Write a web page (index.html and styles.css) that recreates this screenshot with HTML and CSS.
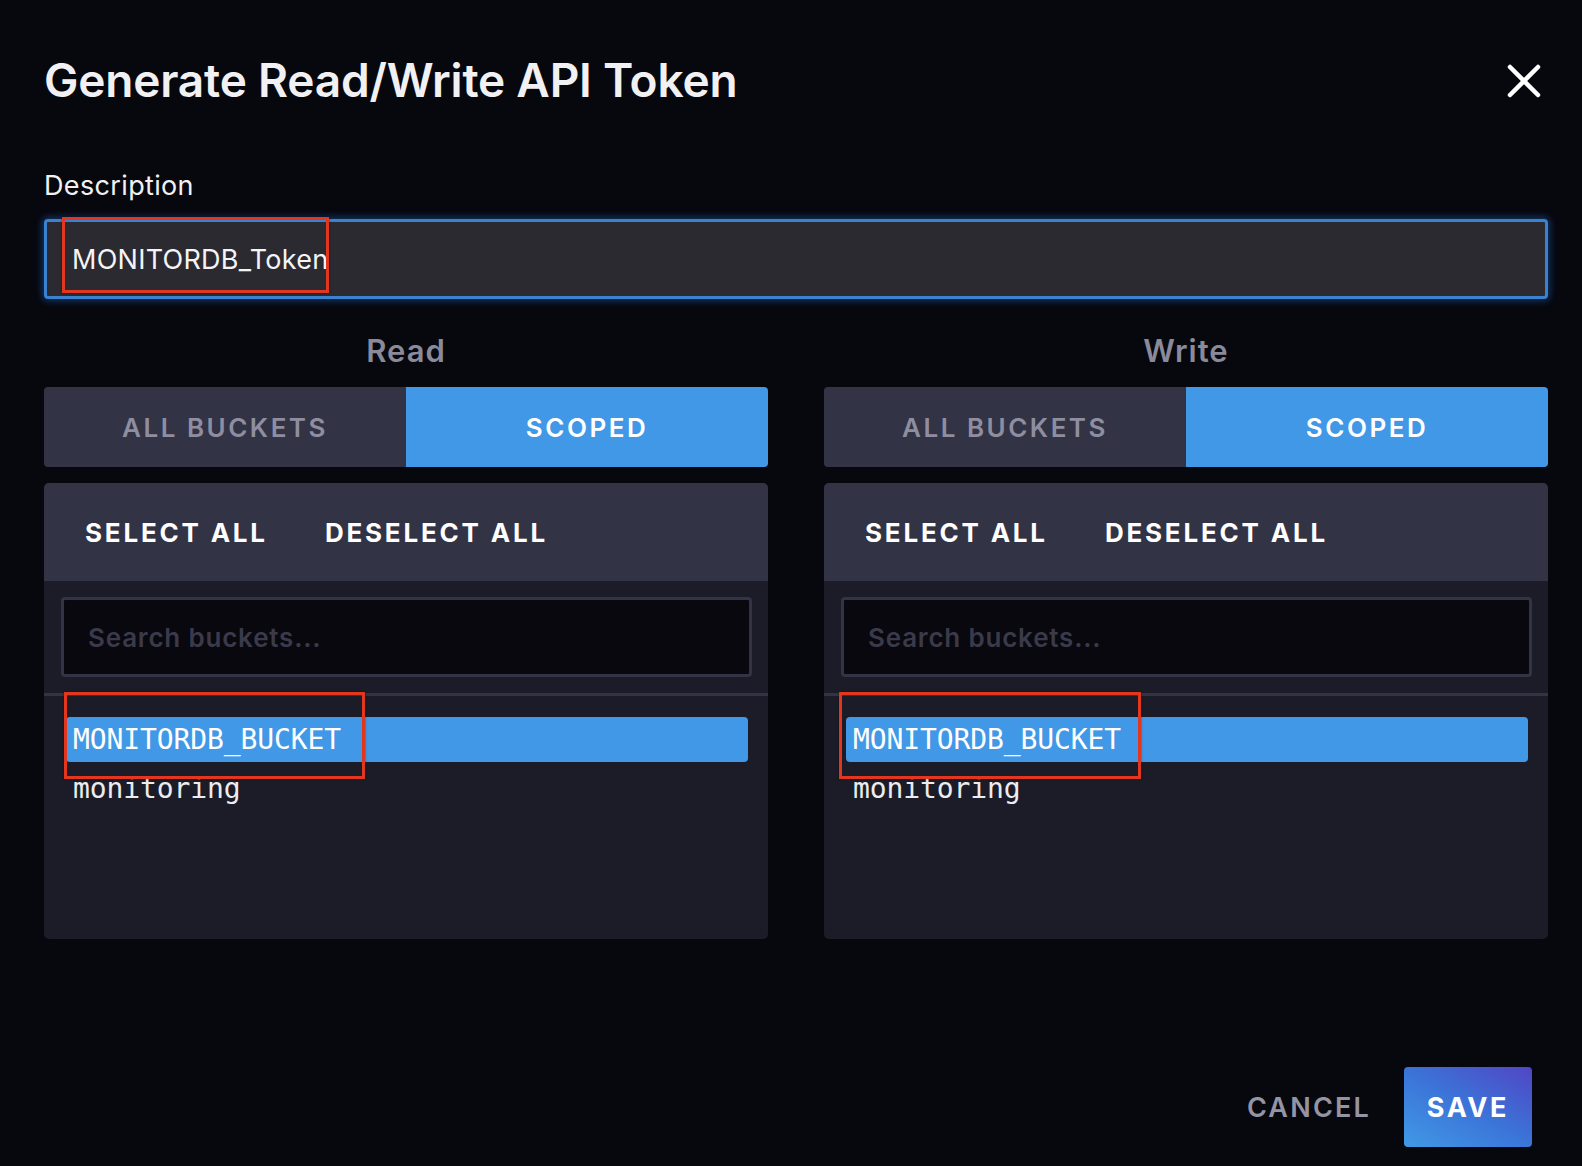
FILE: index.html
```html
<!DOCTYPE html>
<html lang="en">
<head>
<meta charset="utf-8">
<title>Generate Read/Write API Token</title>
<link rel="stylesheet" href="styles.css">
</head>
<body>
<div class="dialog">
  <header class="head">
    <h1 class="title">Generate Read/Write API Token</h1>
    <button class="close" aria-label="Close">
      <svg width="34" height="34" viewBox="0 0 34 34"><path d="M3 3 L31 31 M31 3 L3 31" stroke="#ffffff" stroke-width="4.5" stroke-linecap="round" fill="none"/></svg>
    </button>
  </header>

  <div class="label">Description</div>
  <div class="desc-wrap">
    <div class="desc-input">MONITORDB_Token</div>
    <span class="mark mark-desc"></span>
  </div>

  <div class="cols">
    <section class="col">
      <h2 class="col-title">Read</h2>
      <div class="toggle">
        <div class="tog">ALL BUCKETS</div>
        <div class="tog tog-active">SCOPED</div>
      </div>
      <div class="panel">
        <div class="panel-head">
          <span class="act">SELECT ALL</span>
          <span class="act">DESELECT ALL</span>
        </div>
        <div class="panel-search">
          <div class="search">Search buckets...</div>
        </div>
        <ul class="list">
          <li class="item item-sel">MONITORDB_BUCKET</li>
          <li class="item">monitoring</li>
          <span class="mark mark-list-l"></span>
        </ul>
      </div>
    </section>

    <section class="col">
      <h2 class="col-title">Write</h2>
      <div class="toggle">
        <div class="tog">ALL BUCKETS</div>
        <div class="tog tog-active">SCOPED</div>
      </div>
      <div class="panel">
        <div class="panel-head">
          <span class="act">SELECT ALL</span>
          <span class="act">DESELECT ALL</span>
        </div>
        <div class="panel-search">
          <div class="search">Search buckets...</div>
        </div>
        <ul class="list">
          <li class="item item-sel">MONITORDB_BUCKET</li>
          <li class="item">monitoring</li>
          <span class="mark mark-list-r"></span>
        </ul>
      </div>
    </section>
  </div>

  <footer class="foot">
    <button class="btn-cancel">CANCEL</button>
    <button class="btn-save">SAVE</button>
  </footer>
</div>
</body>
</html>
```

FILE: styles.css
```css
* { box-sizing: border-box; }
html, body {
  margin: 0;
  padding: 0;
  background: #07070e;
}
body {
  font-family: "Inter", "Noto Sans", sans-serif;
  color: #f1f1f3;
  width: 1582px;
  height: 1166px;
  overflow: hidden;
}
.dialog {
  padding: 52px 34px 0 44px;
}
.head {
  display: flex;
  align-items: center;
  justify-content: space-between;
  height: 56px;
}
.title {
  margin: 0;
  font-size: 46px;
  line-height: 56px;
  font-weight: 600;
  color: #f1f1f3;
  letter-spacing: -0.2px;
}
.close {
  background: none;
  border: 0;
  padding: 0;
  margin-right: 7px;
  margin-top: 2px;
  width: 34px;
  height: 34px;
  display: flex;
}
.label {
  margin-top: 62px;
  font-size: 27px;
  line-height: 32px;
  font-weight: 400;
  letter-spacing: 0.35px;
  color: #f1f1f3;
}
.desc-wrap {
  position: relative;
  margin-top: 17px;
}
.desc-input {
  height: 80px;
  border: 3px solid #3a82cf;
  border-radius: 4px;
  background: #2a2a30;
  box-shadow: 0 0 7px 2px rgba(30, 110, 210, 0.45);
  padding-left: 25px;
  display: flex;
  align-items: center;
  font-size: 27px;
  letter-spacing: 0.25px;
  color: #f4f4f6;
}
.mark {
  position: absolute;
  border: 3px solid #e3361f;
  box-shadow: 0 0 2px rgba(0,0,0,0.5);
  pointer-events: none;
}
.mark-desc {
  left: 18px;
  top: -2px;
  width: 267px;
  height: 76px;
}
.cols {
  display: grid;
  grid-template-columns: 724px 724px;
  column-gap: 56px;
}
.col-title {
  margin: 34px 0 18px;
  text-align: center;
  font-size: 31px;
  line-height: 36px;
  font-weight: 600;
  letter-spacing: 1px;
  color: #8a8a9a;
}
.toggle {
  display: grid;
  grid-template-columns: 1fr 1fr;
  height: 80px;
  border-radius: 4px;
  overflow: hidden;
}
.tog {
  display: flex;
  align-items: center;
  justify-content: center;
  background: #333346;
  color: #8e8ea0;
  font-size: 26px;
  font-weight: 600;
  letter-spacing: 2.5px;
}
.tog-active {
  background: #4198e6;
  color: #ffffff;
}
.panel {
  margin-top: 16px;
  height: 456px;
  border-radius: 5px;
  overflow: hidden;
  background: #1c1c28;
  display: flex;
  flex-direction: column;
}
.panel-head {
  height: 98px;
  background: #333346;
  display: flex;
  align-items: center;
  padding-left: 41px;
  gap: 57px;
}
.act {
  font-size: 26px;
  font-weight: 700;
  letter-spacing: 2.8px;
  color: #ffffff;
}
.panel-search {
  padding: 16px 16px 16px 17px;
  border-bottom: 3px solid #333346;
}
.search {
  height: 80px;
  border: 3px solid #333346;
  border-radius: 4px;
  background: #08080e;
  display: flex;
  align-items: center;
  padding-left: 24px;
  font-size: 26px;
  font-weight: 600;
  letter-spacing: 0.8px;
  color: #3a3a4b;
}
.list {
  position: relative;
  list-style: none;
  margin: 0;
  padding: 21px 20px 0 22px;
  display: flex;
  flex-direction: column;
  gap: 4px;
}
.item {
  height: 45px;
  display: flex;
  align-items: center;
  padding-left: 7px;
  font-family: "DejaVu Sans Mono", "Liberation Mono", monospace;
  font-size: 28px;
  letter-spacing: -0.1px;
  color: #ececf0;
  border-radius: 4px;
}
.item-sel {
  background: #4198e6;
  color: #ffffff;
}
.mark-list-l {
  left: 20px;
  top: -4px;
  width: 301px;
  height: 87px;
}
.mark-list-r {
  left: 15px;
  top: -4px;
  width: 302px;
  height: 87px;
}
.foot {
  display: flex;
  justify-content: flex-end;
  align-items: center;
  margin-top: 128px;
  padding-right: 16px;
  gap: 33px;
}
.btn-cancel {
  background: none;
  border: 0;
  padding: 0;
  height: 80px;
  font-family: "Inter", "Noto Sans", sans-serif;
  font-size: 27px;
  font-weight: 600;
  letter-spacing: 2.2px;
  color: #9494a5;
}
.btn-save {
  width: 128px;
  height: 80px;
  border: 0;
  border-radius: 4px;
  background: linear-gradient(30deg, #4199e6 0%, #3b74d8 50%, #5046c4 100%);
  font-family: "Inter", "Noto Sans", sans-serif;
  font-size: 27px;
  font-weight: 700;
  letter-spacing: 2.6px;
  color: #ffffff;
  padding: 0;
}
```
